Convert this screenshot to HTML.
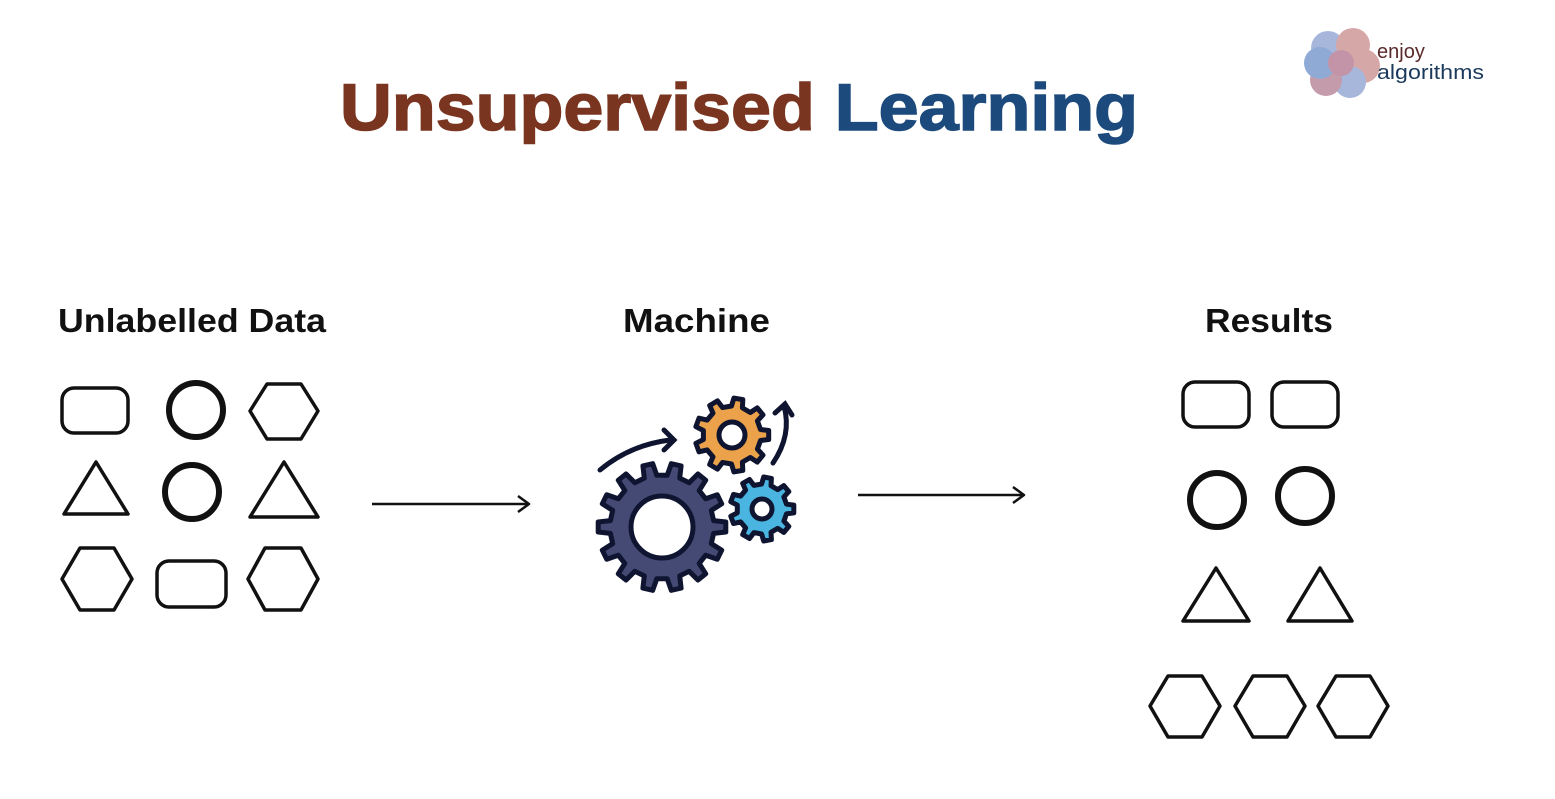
<!DOCTYPE html>
<html><head><meta charset="utf-8"><style>
body{margin:0;width:1555px;height:799px;background:#fff;overflow:hidden;font-family:"Liberation Sans",sans-serif}
svg{position:absolute;left:0;top:0}
</style></head><body>
<svg width="1555" height="799" viewBox="0 0 1555 799" xmlns="http://www.w3.org/2000/svg">
<text x="739" y="130" text-anchor="middle" font-family="Liberation Sans" font-weight="bold" font-size="66" textLength="798" lengthAdjust="spacingAndGlyphs" stroke-width="1.5"><tspan fill="#7a3520" stroke="#7a3520">Unsupervised </tspan><tspan fill="#1c4a7c" stroke="#1c4a7c">Learning</tspan></text>
<g opacity="0.75">
<circle cx="1328" cy="48" r="17" fill="#8a9fd0"/><circle cx="1353" cy="45" r="17" fill="#c98a8a"/><circle cx="1363" cy="66" r="17" fill="#c98a8a"/><circle cx="1350" cy="82" r="16" fill="#8a9fd0"/><circle cx="1326" cy="80" r="16" fill="#b07a90"/><circle cx="1320" cy="63" r="16" fill="#6a8fc8"/><circle cx="1341" cy="63" r="13" fill="#b0708a"/>
</g>
<text x="1377" y="58" font-size="20" fill="#5a2a2a">enjoy</text>
<text x="1377" y="79" font-size="20" fill="#1c3a5c" textLength="107" lengthAdjust="spacingAndGlyphs">algorithms</text>
<g font-weight="bold" font-size="33" fill="#111" lengthAdjust="spacingAndGlyphs">
<text x="58" y="332" textLength="268" lengthAdjust="spacingAndGlyphs">Unlabelled Data</text><text x="623" y="332" textLength="147" lengthAdjust="spacingAndGlyphs">Machine</text><text x="1205" y="332" textLength="128" lengthAdjust="spacingAndGlyphs">Results</text>
</g>
<g fill="none" stroke="#111" stroke-width="3.5" stroke-linejoin="round">
<rect x="62" y="388" width="66" height="45" rx="12"/>
<circle cx="196" cy="410" r="27" stroke-width="6"/>
<polygon points="250,411 267,384 301,384 318,411 301,439 267,439"/>
<polygon points="64,514 96,462 128,514"/>
<circle cx="192" cy="492" r="27" stroke-width="6"/>
<polygon points="250,517 284,462 318,517"/>
<polygon points="62,579 80,548 114,548 132,579 114,610 80,610"/>
<rect x="157" y="561" width="69" height="46" rx="12"/>
<polygon points="248,579 265,548 301,548 318,579 301,610 265,610"/>
<rect x="1183" y="382" width="66" height="45" rx="12"/>
<rect x="1272" y="382" width="66" height="45" rx="12"/>
<circle cx="1217" cy="500" r="27" stroke-width="6"/>
<circle cx="1305" cy="496" r="27" stroke-width="6"/>
<polygon points="1183,621 1216,568 1249,621"/>
<polygon points="1288,621 1320,568 1352,621"/>
<polygon points="1150,706 1168,676 1202,676 1220,706 1202,737 1168,737"/>
<polygon points="1235,706 1253,676 1287,676 1305,706 1287,737 1253,737"/>
<polygon points="1318,706 1336,676 1370,676 1388,706 1370,737 1336,737"/>
<line x1="372" y1="504" x2="528" y2="504" stroke-width="2.5"/><polyline points="518,496 529,504 518,512" stroke-width="2.5"/>
<line x1="858" y1="495" x2="1023" y2="495" stroke-width="2.5"/><polyline points="1013,487 1024,495 1013,503" stroke-width="2.5"/>
</g>
<g id="gears" stroke="#0f1530" stroke-width="5" stroke-linejoin="round"></g>
<g fill="none" stroke="#0f1530" stroke-width="5" stroke-linecap="round">
<path d="M600,470 Q630,445 670,440"/><polyline points="664,430 674,440 664,450"/>
<path d="M773,463 Q792,435 784,406"/><polyline points="775,413 785,404 792,415"/>
</g>
</svg>
<script>
function gear(cx,cy,ro,ri,n,hole,fill){
 let p=[];for(let i=0;i<n;i++){let a=2*Math.PI*i/n,s=Math.PI/n;
 let pts=[[ri,a-s*0.55],[ro,a-s*0.35],[ro,a+s*0.35],[ri,a+s*0.55]];
 pts.forEach(q=>p.push((cx+q[0]*Math.cos(q[1])).toFixed(1)+','+(cy+q[0]*Math.sin(q[1])).toFixed(1)));}
 return `<polygon points="${p.join(' ')}" fill="${fill}"/><circle cx="${cx}" cy="${cy}" r="${hole}" fill="#fff"/>`;}
document.getElementById('gears').innerHTML=
 gear(662,527,64,52,14,31,'#454a74')+gear(732,435,37,29,9,13,'#eba24a')+gear(762,509,32,25,9,10,'#4ab5e0');
</script>
</body></html>
